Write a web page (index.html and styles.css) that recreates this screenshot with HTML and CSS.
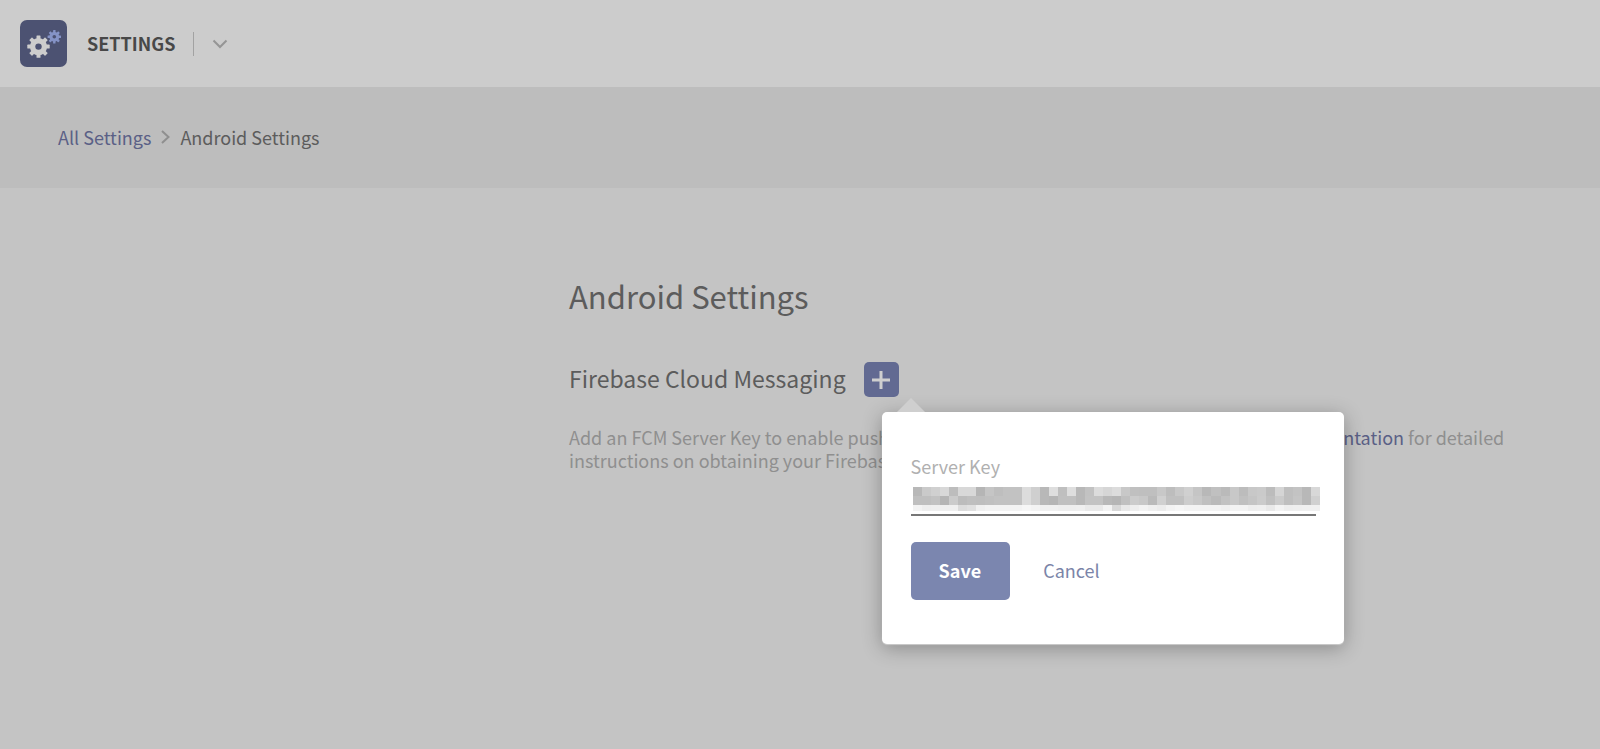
FILE: index.html
```html
<!DOCTYPE html>
<html lang="en">
<head>
<meta charset="utf-8">
<title>Android Settings</title>
<link rel="stylesheet" href="styles.css">
</head>
<body>
<header class="topbar">
  <svg class="logo" viewBox="0 0 47 47" aria-hidden="true">
    <rect width="47" height="47" rx="7" fill="#4c5272"/>
    <g transform="translate(18.5 26.6)">
      <g fill="#cdcdcd">
        <circle r="8.6"/>
        <g id="teeth">
          <rect x="-2" y="-11.2" width="4" height="22.4" rx=".6"/>
          <rect x="-11.2" y="-2" width="22.4" height="4" rx=".6"/>
          <rect x="-2" y="-11.2" width="4" height="22.4" rx=".6" transform="rotate(45)"/>
          <rect x="-11.2" y="-2" width="22.4" height="4" rx=".6" transform="rotate(45)"/>
        </g>
      </g>
      <circle r="3.2" fill="#4c5272"/>
    </g>
    <g transform="translate(34.3 16.8)">
      <g fill="#8593c6">
        <circle r="4.9"/>
        <use href="#teeth" transform="scale(.6)"/>
      </g>
      <circle r="1.8" fill="#4c5272"/>
    </g>
  </svg>
  <span class="app-name">SETTINGS</span>
  <button class="app-switch" type="button" aria-label="Switch app">
    <svg width="16" height="10" viewBox="0 0 16 10" aria-hidden="true"><path d="M1.500 1.500 8 8l6.500-6.500" fill="none" stroke="#959595" stroke-width="2"/></svg>
  </button>
</header>
<nav class="breadcrumb" aria-label="Breadcrumb">
  <a href="#">All Settings</a>
  <svg width="9" height="14" viewBox="0 0 9 14" aria-hidden="true"><path d="M1 1l6.500 6L1 13" fill="none" stroke="#8f8f8f" stroke-width="2"/></svg>
  <span>Android Settings</span>
</nav>
<main class="content">
  <h1>Android Settings</h1>
  <div class="section-head">
    <h2>Firebase Cloud Messaging</h2>
    <div class="anchor">
      <button class="add" type="button" aria-label="Add server key">
        <svg width="18" height="18" viewBox="0 0 18 18" aria-hidden="true"><path d="M9 0v18M0 9h18" stroke="#cfcfcf" stroke-width="3"/></svg>
      </button>
      <form class="popover">
        <label for="server-key">Server Key</label>
        <div class="field">
          <input id="server-key" type="text">
          <svg class="redaction" viewBox="0 0 45 24" preserveAspectRatio="none" shape-rendering="crispEdges" aria-hidden="true"></svg>
        </div>
        <div class="actions">
          <button class="save" type="button">Save</button>
          <button class="cancel" type="button">Cancel</button>
        </div>
      </form>
    </div>
  </div>
  <p>Add an FCM Server Key to enable push notifications for Android devices. Refer to our <a href="#">documentation</a> for detailed instructions on obtaining your Firebase Cloud Messaging server key.</p>
</main>
<script src="redaction.js"></script>
</body>
</html>
```
FILE: redaction.js
```js
// Grey levels of the mosaic that hides the key, one hex pair per cell.
const rows = [
  { y: 0, h: 9, cells: "b8cad0d8bdd8d8b5c5bec2c2dccfb8debfdeb8c2dcd6dcc8c0bfbfc8bdc8d0c5b8c0bac8bcc8cabcd5bfc3b8d8" },
  { y: 9, h: 9, cells: "bfbfc2b5cbbcbfbec0c2c2c2dccfb8b5c0c0b8c3c3b8b5c0ccc8bad0c0c0cdc8c0bac2c8c0c5cbc0cbbfc5b8d0" },
  { y: 18, h: 6, cells: "f3eeefefefdce0f0f3f3f3f3f6f3f0f0eeeeefe9e9f3d8e8eef3efecf3f6f3f3f3f3f0f3f3eeefe9f3eeeff0f0" }
];
const svg = document.querySelector(".redaction");
for (const row of rows) {
  row.cells.match(/../g).forEach((level, i) => {
    const cell = document.createElementNS("http://www.w3.org/2000/svg", "rect");
    cell.setAttribute("x", i);
    cell.setAttribute("y", row.y);
    cell.setAttribute("width", 1);
    cell.setAttribute("height", row.h);
    cell.setAttribute("fill", "#" + level.repeat(3));
    svg.append(cell);
  });
}
```
FILE: styles.css
```css
* { box-sizing: border-box; }
body {
  margin: 0;
  min-height: 100vh;
  background: #c4c4c4;
  color: #5c5c5c;
  font: 18px/24px "Noto Sans CJK SC", "Noto Sans", sans-serif;
}
button, input { font: inherit; }
button { border: 0; padding: 0; background: none; cursor: pointer; }
a { color: #5a6086; text-decoration: none; }
svg { display: block; }

.topbar {
  display: flex;
  align-items: center;
  padding: 20px;
  background: #ccc;
}
.logo { width: 47px; height: 47px; margin-right: 20px; }
.app-name { padding-bottom: 2px; font-weight: 700; color: #484848; }
.app-switch {
  display: flex;
  align-items: center;
  height: 24px;
  margin-left: 18px;
  padding-left: 18px;
  border-left: 1px solid #a2a2a2;
}

.breadcrumb {
  display: flex;
  align-items: center;
  gap: 10px;
  height: 101px;
  padding: 0 58px 2px;
  background: #bdbdbd;
}

.content { padding: 88px 80px 60px 569px; }
h1 { margin: 0 0 46px; font-size: 31px; line-height: 40px; font-weight: 400; }
h2 { margin: 0; font-size: 23px; line-height: 33px; font-weight: 400; }
.section-head { display: flex; gap: 18px; }
.anchor { position: relative; }
.add {
  display: grid;
  place-items: center;
  width: 35px;
  height: 35px;
  border-radius: 5px;
  background: #626a92;
}
p { margin: 29px 0 0; line-height: 23px; color: #8f8f8f; }

.popover {
  position: absolute;
  top: 50px;
  left: 18px;
  width: 462px;
  padding: 42px 28px 44px 29px;
  border-radius: 5px;
  background: #fff;
  box-shadow: 0 1px 1px #ccc, 0 4px 20px rgba(0, 0, 0, .3);
}
.popover::before {
  content: "";
  position: absolute;
  left: 15px;
  bottom: 100%;
  border: 14px solid transparent;
  border-top: 0;
  border-bottom-color: #cfcfcf;
}
.popover label { display: block; color: #b0b0b0; }
.field { position: relative; }
.field input {
  display: block;
  width: 100%;
  height: 38px;
  padding: 0;
  border: 0;
  border-bottom: 2px solid #777;
  background: none;
  outline: 0;
}
.redaction {
  position: absolute;
  top: 9px;
  left: 2px;
  width: 407px;
  height: 24px;
}
.actions { display: flex; gap: 33px; margin-top: 26px; }
.save {
  padding: 16px 29px 18px 28px;
  border-radius: 5px;
  background: #7b86af;
  color: #fff;
  font-weight: 700;
}
.cancel { padding-bottom: 2px; color: #7b84a8; }
```
